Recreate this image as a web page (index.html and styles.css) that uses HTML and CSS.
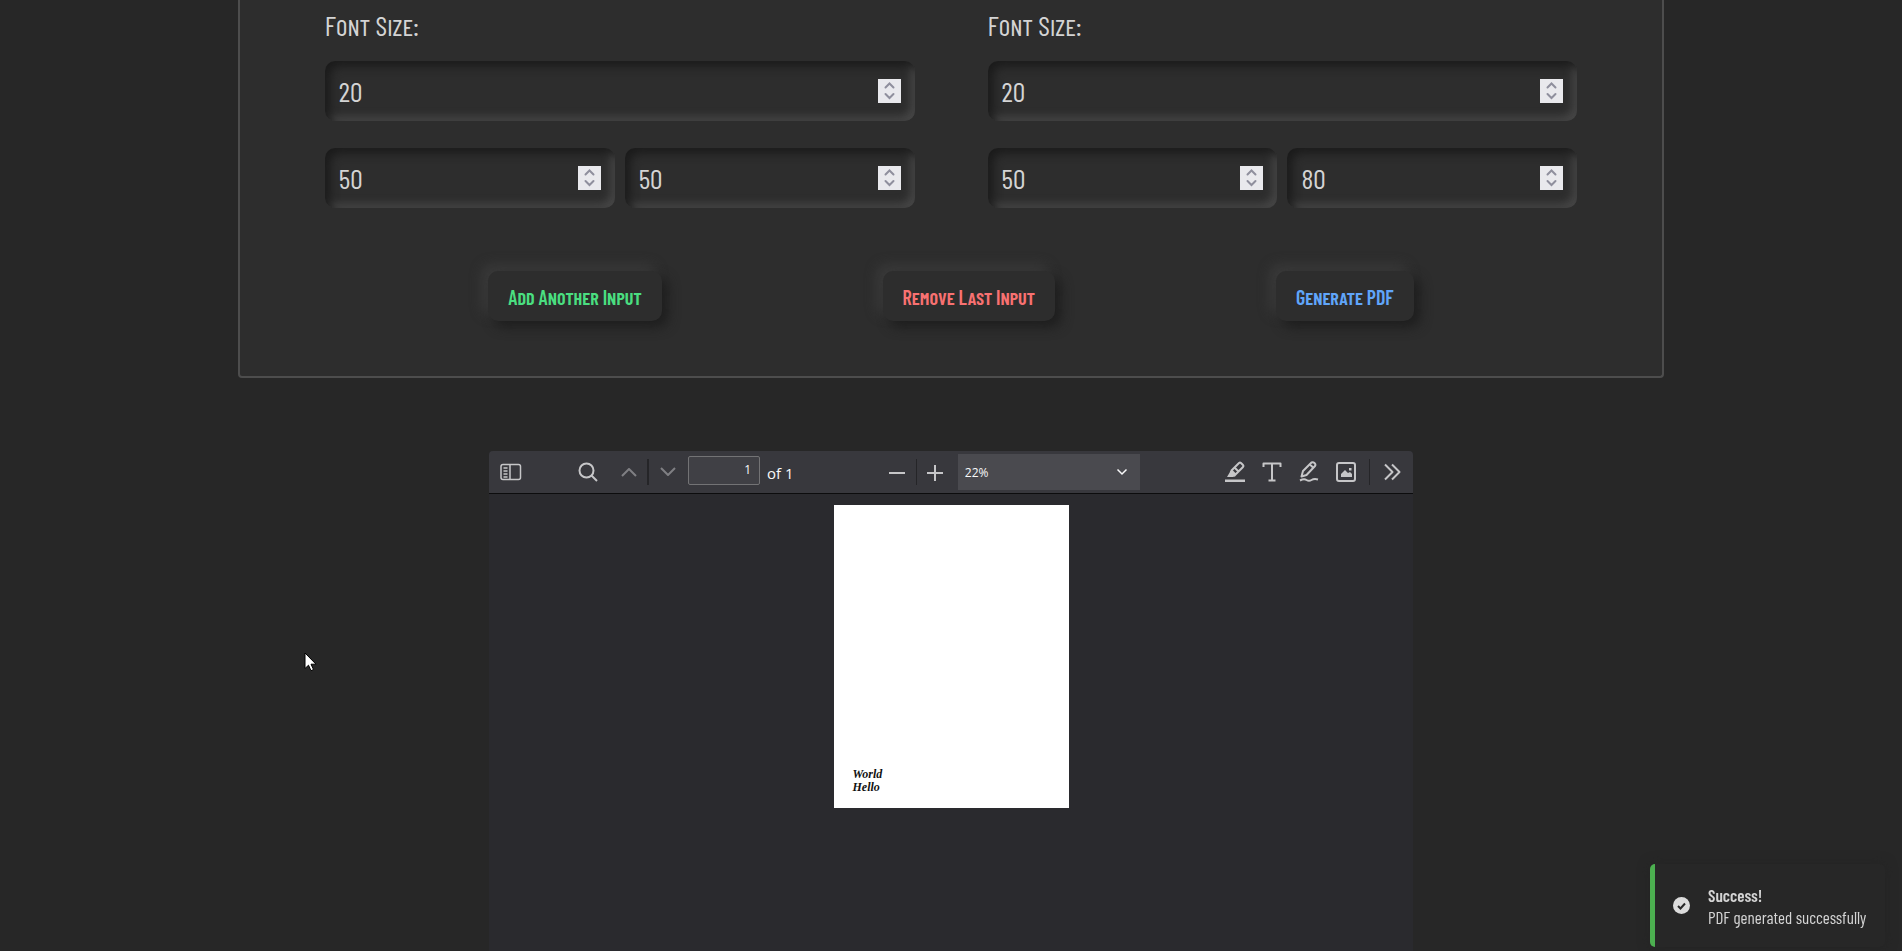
FILE: index.html
```html
<!DOCTYPE html>
<html lang="en">
<head>
<meta charset="utf-8">
<title>PDF Generator</title>
<link rel="stylesheet" href="styles.css">
</head>
<body>
<svg class="sprite" aria-hidden="true">
  <symbol id="spin" viewBox="0 0 23 24"><path d="M7.5 8.5l4-4 4 4M7.5 15l4 4 4-4"/></symbol>
</svg>
<main class="page">
  <form class="panel">
    <div class="columns">
      <section class="group">
        <label class="caption" for="size-1">Font Size:</label>
        <div class="field"><input id="size-1" type="number" value="20"><svg class="spin"><use href="#spin"/></svg></div>
        <div class="pair">
          <div class="field"><input type="number" value="50" aria-label="X position"><svg class="spin"><use href="#spin"/></svg></div>
          <div class="field"><input type="number" value="50" aria-label="Y position"><svg class="spin"><use href="#spin"/></svg></div>
        </div>
      </section>
      <section class="group">
        <label class="caption" for="size-2">Font Size:</label>
        <div class="field"><input id="size-2" type="number" value="20"><svg class="spin"><use href="#spin"/></svg></div>
        <div class="pair">
          <div class="field"><input type="number" value="50" aria-label="X position"><svg class="spin"><use href="#spin"/></svg></div>
          <div class="field"><input type="number" value="80" aria-label="Y position"><svg class="spin"><use href="#spin"/></svg></div>
        </div>
      </section>
    </div>
    <div class="actions">
      <button type="button" class="action add">Add Another Input</button>
      <button type="button" class="action remove">Remove Last Input</button>
      <button type="button" class="action generate">Generate PDF</button>
    </div>
  </form>

  <section class="viewer">
    <div class="toolbar">
      <div class="tools tools-left">
        <button type="button" class="tool sidebar" aria-label="Toggle sidebar"><svg viewBox="0 0 22 18"><rect x="1" y="1.5" width="19.5" height="15" rx="2"/><path d="M10 1.5v15M3.5 5h4M3.5 8h4M3.5 11h4M3.5 14h4"/></svg></button>
        <button type="button" class="tool find" aria-label="Find"><svg viewBox="0 0 20 20"><circle cx="8.5" cy="8.5" r="7"/><path d="M13.5 13.5l5.5 5.5"/></svg></button>
        <button type="button" class="tool" aria-label="Previous page" disabled><svg viewBox="0 0 20 20"><path d="M3 14l7-7 7 7"/></svg></button>
        <span class="rule wide"></span>
        <button type="button" class="tool" aria-label="Next page" disabled><svg viewBox="0 0 20 20"><path d="M3 6l7 7 7-7"/></svg></button>
        <input class="page-number" type="text" value="1" aria-label="Page">
        <span class="page-count">of 1</span>
      </div>
      <div class="tools">
        <button type="button" class="tool" aria-label="Zoom out"><svg viewBox="0 0 20 20"><path d="M2 11h16"/></svg></button>
        <span class="rule"></span>
        <button type="button" class="tool" aria-label="Zoom in"><svg viewBox="0 0 20 20"><path d="M2 11h16M10 3v16"/></svg></button>
        <div class="zoom">
          <select aria-label="Zoom"><option>22%</option></select>
          <svg class="caret" viewBox="0 0 12 8"><path d="M1.5 1.5l4.500 4.500 4.500-4.500"/></svg>
        </div>
      </div>
      <div class="tools tools-right">
        <button type="button" class="tool" aria-label="Highlight"><svg viewBox="0 0 20 22"><path d="M6.500 9.500l7.500-7.500q1-.8 2 0l2 2q.8 1 0 2l-7.500 7.500zM9.500 6.500l4 4M5.500 10l5 5"/><path class="solid" d="M5.500 10l5 5-2.500 1H2zM0 18.500h20v2.500H0z"/></svg></button>
        <button type="button" class="tool" aria-label="Text"><svg viewBox="0 0 20 22"><path d="M1.500 6V2.500h17V6M10 2.500v17M6.500 19.500h7"/></svg></button>
        <button type="button" class="tool" aria-label="Draw"><svg viewBox="0 0 20 22"><path d="M2.500 15.500l1.500-5.500 8.500-8.500q1.500-.8 3 .5t.5 3L7.500 14zM11 3.500l4 4M1 19.500q4-2 6.500-.5t5 0 6.500-.5"/></svg></button>
        <button type="button" class="tool" aria-label="Image"><svg viewBox="0 0 20 22"><rect x="1" y="2" width="18" height="18" rx="2"/><path class="solid" d="M5 16v-3l4-4 3 3 2-1 2 2v3zM13 7h2.500v2.500H13z"/></svg></button>
        <span class="rule spaced"></span>
        <button type="button" class="tool" aria-label="More tools"><svg viewBox="0 0 20 20"><path d="M3 2.500l7.500 7.500L3 17.500M10 2.500l7.500 7.500-7.500 7.500"/></svg></button>
      </div>
    </div>
    <div class="canvas">
      <div class="sheet"><p class="script">World<br>Hello</p></div>
    </div>
  </section>
</main>

<aside class="toast" role="status">
  <svg class="check" viewBox="0 0 17 17"><circle cx="8.500" cy="8.500" r="8.500"/><path d="M5 9l2.500 2.500L12 6.500"/></svg>
  <div>
    <strong>Success!</strong>
    <p>PDF generated successfully</p>
  </div>
</aside>
<svg class="pointer" viewBox="0 0 13 20"><path d="M1 1v15.500l3.500-3.300 2.500 5.500 2.500-1.200L7 12.200h5z"/></svg>
</body>
</html>
```
FILE: styles.css
```css
* { box-sizing: border-box; }

body {
  margin: 0;
  background: #272727;
  color: #d4d4d4;
  font-family: "Barlow Condensed", "Liberation Sans Narrow", "Liberation Sans", sans-serif;
  overflow: hidden;
}

.sprite { display: none; }

.page {
  height: 100vh;
  display: flex;
  flex-direction: column;
  align-items: center;
}

.panel {
  width: 75%;
  padding: 7px 85px 55px;
  background: #2d2d2d;
  border: 2px solid #4d4d4d;
  border-top: 0;
  border-radius: 0 0 4px 4px;
}

.columns {
  display: grid;
  grid-template-columns: repeat(2, minmax(0, 1fr));
  gap: 73px;
}

.caption {
  display: block;
  height: 36px;
  margin-bottom: 18px;
  font-size: 28px;
  line-height: 36px;
  font-variant: small-caps;
}

.field {
  display: flex;
  align-items: center;
  flex: 1;
  min-width: 0;
  height: 60px;
  padding: 0 14px;
  border-radius: 10px;
  box-shadow: inset 5px 5px 10px #1b1b1b, inset -4px -4px 8px #4a4a4a;
}

.field input {
  flex: 1;
  min-width: 0;
  padding: 0;
  border: 0;
  outline: 0;
  background: none;
  color: #d4d4d4;
  font: 28px "Barlow Condensed", "Liberation Sans Narrow", "Liberation Sans", sans-serif;
  appearance: textfield;
}

.field input::-webkit-inner-spin-button { appearance: none; }

.spin {
  flex: none;
  width: 23px;
  height: 24px;
  background: #e9e9ed;
  fill: none;
  stroke: #8f8f9d;
  stroke-width: 2;
  stroke-linecap: round;
}

.pair {
  display: flex;
  gap: 10px;
  margin-top: 27px;
}

.actions {
  display: flex;
  justify-content: space-around;
  padding: 0 53px;
  margin-top: 63px;
}

.action {
  height: 50px;
  padding: 2px 20px 0;
  border: 0;
  border-radius: 10px;
  background: #2d2d2d;
  box-shadow: 6px 6px 12px #1e1e1e, -6px -6px 12px #3b3b3b;
  font: 600 20px "Barlow Condensed", "Liberation Sans Narrow", "Liberation Sans", sans-serif;
  font-variant: small-caps;
}

.add { color: #4ade80; }
.remove { color: #f87171; }
.generate { color: #60a5fa; }

.viewer {
  flex: 1;
  display: flex;
  flex-direction: column;
  width: 924px;
  max-width: 100%;
  margin-top: 73px;
  border-radius: 4px 4px 0 0;
  overflow: hidden;
  background: #2a2a2e;
  font-family: "Open Sans", "Noto Sans", sans-serif;
}

.toolbar {
  display: flex;
  justify-content: space-between;
  height: 43px;
  padding: 0 2px 0 3px;
  background: #38383d;
  border-bottom: 1px solid #0c0c0d;
}

.tools {
  display: flex;
  align-items: center;
}

.tools-left { padding-right: 8px; }

.tool {
  display: flex;
  align-items: center;
  justify-content: center;
  width: 37px;
  height: 36px;
  padding: 0;
  border: 0;
  background: none;
}

.tool:disabled { opacity: 0.5; }

.tool svg {
  width: 20px;
  height: 22px;
  fill: none;
  stroke: #c6c6c8;
  stroke-width: 2;
  stroke-linejoin: round;
}

.tool .solid { fill: #c6c6c8; stroke: none; }

.sidebar { margin-right: 40px; }
.find { margin-right: 4px; }

.tool.sidebar svg { width: 22px; stroke-width: 1.5; }

.rule {
  width: 1px;
  height: 26px;
  background: #252528;
}

.rule.wide { width: 2px; }
.rule.spaced { margin: 0 4px; }

.page-number {
  width: 72px;
  height: 29px;
  margin: 0 7px 4px 2px;
  padding: 0 8px 2px;
  border: 1px solid #737375;
  border-radius: 2px;
  background: #404045;
  color: #f9f9fa;
  font: 12px "Open Sans", "Noto Sans", sans-serif;
  text-align: right;
}

.page-count {
  padding-top: 2px;
  color: #f9f9fa;
  font-size: 15px;
}

.zoom {
  display: grid;
  align-items: center;
  width: 182px;
  height: 36px;
  margin-left: 4px;
  background: #4a4a4f;
}

.zoom select {
  grid-area: 1 / 1;
  height: 100%;
  padding: 0 7px;
  border: 0;
  appearance: none;
  background: none;
  color: #f9f9fa;
  font: 12px "Open Sans", "Noto Sans", sans-serif;
}

.caret {
  grid-area: 1 / 1;
  justify-self: end;
  width: 12px;
  height: 8px;
  margin-right: 12px;
  fill: none;
  stroke: #f9f9fa;
  stroke-width: 1.5;
  pointer-events: none;
}

.canvas {
  display: flex;
  justify-content: center;
  padding-top: 11px;
}

.sheet {
  display: flex;
  align-items: flex-end;
  width: 235px;
  height: 303px;
  padding: 0 19px 14px;
  background: #fff;
}

.script {
  margin: 0;
  color: #111;
  font: italic bold 12px/13px "Liberation Serif", serif;
}

.toast {
  position: fixed;
  right: 17px;
  bottom: 4px;
  display: flex;
  align-items: center;
  gap: 18px;
  width: 235px;
  height: 83px;
  padding-left: 18px;
  border-left: 5px solid #4caf50;
  border-radius: 5px;
  background: #272727;
  box-shadow: 0 0 12px #242424;
  font-size: 17px;
  line-height: 22px;
  white-space: nowrap;
}

.toast strong { display: block; font-weight: 600; }
.toast p { margin: 0; }

.check {
  width: 17px;
  height: 17px;
  fill: #dcdcdc;
}

.check path { fill: none; stroke: #272727; stroke-width: 2; }

.pointer {
  position: fixed;
  left: 304px;
  top: 652px;
  width: 13px;
  height: 20px;
  fill: #fff;
  stroke: #000;
}
```
